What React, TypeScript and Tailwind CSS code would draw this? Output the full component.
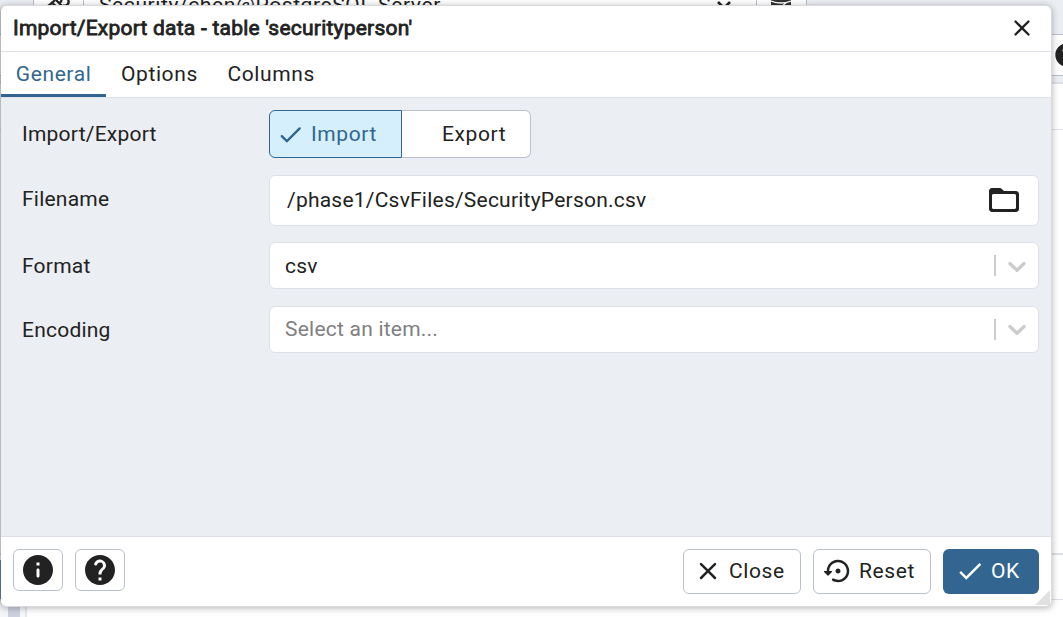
import React, { useState } from "react";

const paths = {
  close:
    "M18.3 5.71a.9959.9959 0 0 0-1.41 0L12 10.59 7.11 5.7a.9959.9959 0 0 0-1.41 0c-.39.39-.39 1.02 0 1.41L10.59 12 5.7 16.89c-.39.39-.39 1.02 0 1.41.39.39 1.02.39 1.41 0L12 13.41l4.89 4.89c.39.39 1.02.39 1.41 0 .39-.39.39-1.02 0-1.41L13.41 12l4.89-4.89c.38-.38.38-1.02 0-1.4z",
  check:
    "M9 16.17 5.53 12.7a.9959.9959 0 0 0-1.41 0c-.39.39-.39 1.02 0 1.41l4.18 4.18c.39.39 1.02.39 1.41 0L20.29 7.71c.39-.39.39-1.02 0-1.41a.9959.9959 0 0 0-1.41 0L9 16.17z",
  checkSharp: "M9 16.17 4.83 12l-1.42 1.41L9 19 21 7l-1.41-1.41z",
  info:
    "M12 2C6.48 2 2 6.48 2 12s4.48 10 10 10 10-4.48 10-10S17.52 2 12 2zm0 15c-.55 0-1-.45-1-1v-4c0-.55.45-1 1-1s1 .45 1 1v4c0 .55-.45 1-1 1zm1-8h-2V7h2v2z",
  help:
    "M12 2C6.48 2 2 6.48 2 12s4.48 10 10 10 10-4.48 10-10S17.52 2 12 2zm1 17h-2v-2h2v2zm2.07-7.75-.9.92c-.5.51-.86.97-1.04 1.69-.08.32-.13.68-.13 1.14h-2v-.5c0-.46.08-.9.22-1.31.2-.58.53-1.1.95-1.52l1.24-1.26c.46-.44.68-1.1.55-1.8-.13-.72-.69-1.33-1.39-1.53-1.11-.31-2.14.32-2.47 1.27-.12.37-.43.65-.82.65h-.3C8.4 9 8 8.44 8.16 7.88c.43-1.47 1.68-2.59 3.23-2.83 1.52-.24 2.97.55 3.87 1.8 1.18 1.63.83 3.38-.19 4.4z",
  folder:
    "M20 6h-8l-1.41-1.41C10.21 4.21 9.7 4 9.17 4H4c-1.1 0-1.99.9-1.99 2L2 18c0 1.1.9 2 2 2h16c1.1 0 2-.9 2-2V8c0-1.1-.9-2-2-2zm-1 12H5c-.55 0-1-.45-1-1V9c0-.55.45-1 1-1h14c.55 0 1 .45 1 1v8c0 .55-.45 1-1 1z",
  reset:
    "M14 12c0-1.1-.9-2-2-2s-2 .9-2 2 .9 2 2 2 2-.9 2-2zm-2.44-8.98C6.8 3.24 3 7.2 3 12H1.21c-.45 0-.67.54-.35.85l2.79 2.79c.2.2.51.2.71 0l2.79-2.79c.31-.31.09-.85-.36-.85H5c0-3.9 3.18-7.05 7.1-7 3.71.05 6.84 3.18 6.9 6.9.05 3.91-3.1 7.1-7 7.1-1.25 0-2.42-.34-3.44-.91-.39-.22-.87-.14-1.18.18-.46.46-.37 1.25.2 1.57C8.84 20.6 10.37 21 12 21c5.05 0 9.14-4.17 9-9.26-.13-4.88-4.41-8.94-9.44-8.72z",
};

function Icon({ name, className }: { name: keyof typeof paths; className: string }) {
  return (
    <svg viewBox="0 0 24 24" fill="currentColor" aria-hidden="true" className={`block shrink-0 ${className}`}>
      <path d={paths[name]} />
    </svg>
  );
}

function Chevron() {
  return (
    <svg viewBox="0 0 20 20" fill="currentColor" aria-hidden="true" className="block size-[30px] shrink-0">
      <path d="M4.516 7.548c0.436-0.446 1.043-0.481 1.576 0l3.908 3.747 3.908-3.747c0.533-0.481 1.141-0.446 1.574 0 0.436 0.445 0.408 1.197 0 1.615-0.406 0.418-4.695 4.502-4.695 4.502-0.217 0.223-0.502 0.335-0.787 0.335s-0.57-0.112-0.789-0.335c0 0-4.287-4.084-4.695-4.502s-0.436-1.17 0-1.615z" />
    </svg>
  );
}

function Select({ value, placeholder }: { value?: string; placeholder?: string }) {
  return (
    <div className="flex h-[47px] w-[770px] items-center rounded-md border border-[#dde0e6] bg-white pl-[15px] pr-[6px]">
      <span className={value ? "flex-1" : "flex-1 pb-[2px] text-[#808080]"}>{value ?? placeholder}</span>
      <span className="mr-[6px] h-[21px] w-[2px] bg-[#cccccc]" />
      <span className={value ? "text-[#cccccc]" : "pb-px text-[#cccccc]"}>
        <Chevron />
      </span>
    </div>
  );
}

function Workspace() {
  return (
    <div className="flex h-full flex-col bg-[#ebeef3]">
      <div className="flex h-[34px] shrink-0 pl-[33px]">
        <div className="flex h-[18px] w-[774px] border-x border-[#bac1cd] bg-white text-[#222222]">
          <div className="flex w-[50px] items-start justify-center overflow-hidden border-r border-[#bac1cd]">
            <svg viewBox="0 0 24 12" className="h-[12px] w-[24px]" fill="none" stroke="currentColor" strokeWidth="2.2">
              <path d="M1 6 5 3 8 0M4 2l5 4M9 0l7 7M12 4l3-4M16 5.5h3q4-2 2-6" />
            </svg>
          </div>
          <div className="flex w-[673px] items-start justify-between border-r border-[#bac1cd] pl-[15px] pr-[24px]">
            <span className="mt-[-7px] text-[21px] leading-[24px] tracking-[0.6px]">Security/chen@PostgreSQL Server</span>
            <svg viewBox="0 0 16 10" className="h-[10px] w-[16px]" fill="none" stroke="currentColor" strokeWidth="2.5">
              <path d="m2 2 6 6 6-6" />
            </svg>
          </div>
          <div className="flex flex-1 justify-center pr-[2px]">
            <svg viewBox="0 0 20 12" className="h-[12px] w-[20px]">
              <path d="M0 0h20v12H0z" fill="#333333" />
              <path d="M0 1q10 4 20 0M11 6l4-3" stroke="white" strokeWidth="1.3" fill="none" />
            </svg>
          </div>
        </div>
      </div>
      <div className="flex h-[42px] shrink-0 items-center justify-end border-y border-[#bac1cd] bg-white">
        <span className="-mr-[18px] text-[#222222]">
          <Icon name="help" className="size-[28px]" />
        </span>
      </div>
      <div className="h-[6px] shrink-0" />
      <div className="h-[48px] shrink-0 border-b border-t-2 border-[#dde0e6] bg-white" />
      <div className="h-[425px] shrink-0 border-b-2 border-[#dde0e6] bg-white" />
      <div className="h-[45px] shrink-0 border-b border-[#dde0e6] bg-white pt-[5px]">
        <div className="h-[39px] w-px bg-[#6d96b8]" />
      </div>
      <div className="flex flex-1 bg-white">
        <div className="w-[8px] bg-[#f3f5f8]" />
        <div className="w-[12px] bg-[#cbd1de]" />
        <div className="w-[7px] border-r-2 border-[#e4e7ec] bg-[#f7f8fa]" />
      </div>
    </div>
  );
}

export default function App() {
  const [tab, setTab] = useState("General");
  return (
    <div className="relative h-[617px] w-[1063px] overflow-hidden font-['Roboto',sans-serif] text-[21px] leading-[24px] tracking-[0.225px] text-[#222222]">
      <Workspace />
      <div className="absolute left-0 top-[5px] flex h-[602px] w-[1052px] flex-col overflow-hidden rounded-[6px] border border-[#d8dade] border-l-[rgba(0,0,0,0.12)] bg-white bg-clip-padding shadow-[0_1px_7px_rgba(0,0,0,0.3)]">
        <header className="flex h-[46px] shrink-0 items-center justify-between border-b border-[#dde0e6] pb-[2px] pl-3 pr-[15px]">
          <h1 className="text-[21px] font-normal leading-[24px] tracking-[0.225px] [-webkit-text-stroke:0.8px_#222222]">
            Import/Export data - table 'securityperson'
          </h1>
          <button aria-label="Close dialog">
            <Icon name="close" className="size-[28px]" />
          </button>
        </header>
        <nav className="flex h-[46px] shrink-0 border-b border-[#dde0e6] tracking-[0.6px]">
          {["General", "Options", "Columns"].map((name) => (
            <button
              key={name}
              onClick={() => setTab(name)}
              className={
                tab === name
                  ? "h-[45px] border-b-3 border-[#326690] px-[14.8px] pt-[2px] text-[#326690]"
                  : "h-[45px] border-b-3 border-transparent px-[14.8px] pt-[2px]"
              }
            >
              {name}
            </button>
          ))}
        </nav>
        <main className="flex flex-1 flex-col bg-[#ebeef3] pl-[21px] pt-3">
          <div className="flex h-[48px] items-center">
            <label className="w-[247px]">Import/Export</label>
            <div className="flex h-[48px] tracking-[0.6px]">
              <button className="flex w-[133px] items-center gap-[6px] rounded-l-md border border-[#326690] bg-[#d6effc] pl-[6px] text-[#326690]">
                <Icon name="check" className="size-[29px]" />
                Import
              </button>
              <button className="w-[129px] rounded-r-md border border-l-0 border-[#bac1cd] bg-white pl-[40px] text-left">
                Export
              </button>
            </div>
          </div>
          <div className="mt-[17px] flex h-[51px] items-center">
            <label className="w-[247px] pb-[3px]">Filename</label>
            <div className="flex h-[51px] w-[770px] items-center justify-between rounded-md border border-[#dde0e6] bg-white pb-[2px] pl-[17px] pr-[16px]">
              <span>/phase1/CsvFiles/SecurityPerson.csv</span>
              <Icon name="folder" className="size-[36px]" />
            </div>
          </div>
          <div className="mt-4 flex h-[47px] items-center">
            <label className="w-[247px]">Format</label>
            <Select value="csv" />
          </div>
          <div className="mt-[17px] flex h-[47px] items-center">
            <label className="w-[247px]">Encoding</label>
            <Select placeholder="Select an item..." />
          </div>
        </main>
        <footer className="flex h-[70px] shrink-0 items-start border-t border-[#dde0e6] px-3 pt-3 tracking-[0.6px]">
          <button aria-label="Information" className="flex h-[42px] w-[50px] items-center justify-center rounded-md border border-[#bac1cd]">
            <Icon name="info" className="size-[36px]" />
          </button>
          <button aria-label="Help" className="ml-3 flex h-[42px] w-[50px] items-center justify-center rounded-md border border-[#bac1cd]">
            <Icon name="help" className="size-[36px]" />
          </button>
          <div className="ml-auto flex gap-3">
            <button className="flex h-[45px] w-[118px] items-center gap-[6px] rounded-md border border-[#bac1cd] pb-px pl-[9px]">
              <Icon name="close" className="size-[30px]" />
              Close
            </button>
            <button className="flex h-[45px] w-[118px] items-center gap-[6px] rounded-md border border-[#bac1cd] pb-px pl-[9px]">
              <Icon name="reset" className="size-[30px]" />
              Reset
            </button>
            <button className="flex h-[45px] w-[96px] items-center gap-[6px] rounded-md bg-[#326690] pb-px pl-[12px] text-white">
              <Icon name="checkSharp" className="size-[30px]" />
              OK
            </button>
          </div>
        </footer>
        <svg viewBox="0 0 15 15" className="absolute bottom-px right-px size-[15px]" aria-hidden="true">
          <path d="M15 0v15H0z" fill="#e1e1e1" />
        </svg>
      </div>
    </div>
  );
}
